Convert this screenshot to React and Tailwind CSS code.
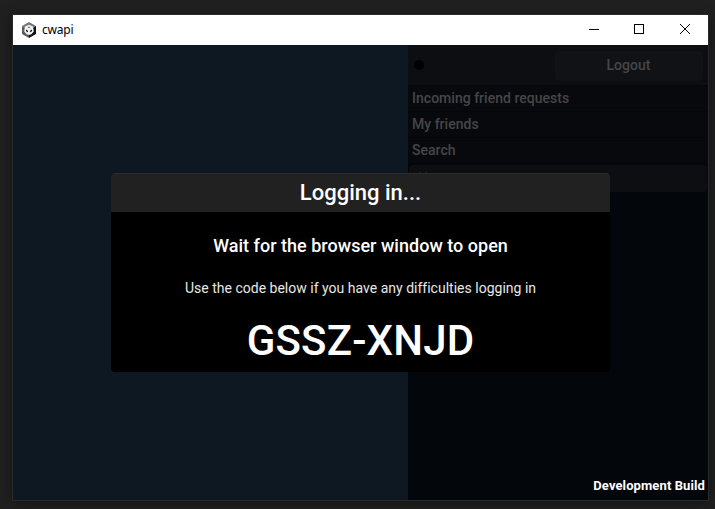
function CubeIcon() {
  return (
    <svg width="16" height="16" viewBox="0 0 16 16" className="shrink-0">
      <path d="M8 0 15 4 8 8 1 4Z" fill="#777" />
      <path d="M1 4 8 8V16L1 12Z" fill="#5c5c5c" />
      <path d="M15 4V12L8 16V8Z" fill="#111" />
      <path d="M8 2.8 12 4.6 12.8 9.6 10.4 12.2 8 13 5.6 12.2 3.2 9.6 4 4.6Z" fill="#f0f0f0" />
      <path d="M8 4.4 9.4 5.3 8 6.2 6.6 5.3Z" fill="#777" />
      <path d="M5 7.6 7 8.7V10.3L5 9.3ZM11 7.6 9 8.7V10.3L11 9.3Z" fill="#222" />
    </svg>
  );
}

function TitleBar() {
  return (
    <header className="flex h-[30px] shrink-0 items-center bg-white text-black">
      <div className="flex flex-1 items-center gap-[5px] pl-2">
        <CubeIcon />
        <span className="font-['Noto_Sans',sans-serif] text-[12px] leading-4 tracking-[-0.2px]">cwapi</span>
      </div>
      <svg width="122" height="30" viewBox="0 0 122 30" fill="none" stroke="#000" shapeRendering="crispEdges">
        <path d="M3 14.5H13" />
        <rect x="48.5" y="9.5" width="9" height="9" />
        <path d="M94 9 104 19M104 9 94 19" shapeRendering="auto" />
      </svg>
    </header>
  );
}

const sections = ["Incoming friend requests", "My friends", "Search"];

function Sidebar() {
  return (
    <aside className="flex w-[300px] shrink-0 flex-col bg-[#03060b] text-[14px] font-medium tracking-[0.02px] text-[#454647]">
      <div className="flex h-[40px] items-center justify-between bg-[#0d0e12] pl-1.5 pr-[5px]">
        <span className="size-[10px] rounded-full bg-black" />
        <button className="mt-[1px] h-[30px] w-[148px] rounded bg-[#111216] pr-px">
          <span>Logout</span>
        </button>
      </div>
      {sections.map((label) => (
        <div key={label} className="mt-px flex h-[25px] items-center bg-[#08090d] pl-1">
          <span>{label}</span>
        </div>
      ))}
      <div className="mx-px mt-[2px] h-[27px] rounded bg-[#0d0e12] pl-[9px] pt-[4px] text-[14px] leading-[18px] text-[#242528]">
        Name
      </div>
    </aside>
  );
}

function LoginDialog() {
  return (
    <div className="absolute left-[98px] top-[158px] flex h-[198.5px] w-[499px] flex-col items-center overflow-hidden rounded bg-black text-white">
      <h1 className="flex h-[39px] w-full items-center justify-center border-t border-[#2b2c2e] bg-[#212121] pb-[2px] text-[22px] font-medium">
        Logging in...
      </h1>
      <p className="mt-[22px] whitespace-nowrap text-[18px] font-medium leading-6 tracking-[0.02px]">
        Wait for the browser window to open
      </p>
      <p className="mt-[20px] whitespace-nowrap text-[14px] leading-5 tracking-[0.01px] text-[#e8e8e8]">
        Use the code below if you have any difficulties logging in
      </p>
      <p className="mt-[18px] whitespace-nowrap text-[42px] font-medium leading-[50px] tracking-[0.15px]">GSSZ-XNJD</p>
    </div>
  );
}

export default function App() {
  return (
    <div className="h-[509px] w-[715px] overflow-hidden bg-[#202020] pl-[13px] pt-[15px] font-[Roboto,sans-serif]">
      <main className="relative flex h-[485px] w-[695px] flex-col shadow-[0_0_0_1px_#2a2a2a,0_2px_12px_#111]">
        <TitleBar />
        <div className="flex flex-1">
          <div className="flex-1 bg-[#0e1823]" />
          <Sidebar />
        </div>
        <LoginDialog />
        <div className="absolute bottom-[4px] right-[3px] whitespace-nowrap text-[13px] font-bold leading-5 tracking-[0.1px] text-white">
          Development Build
        </div>
      </main>
    </div>
  );
}
